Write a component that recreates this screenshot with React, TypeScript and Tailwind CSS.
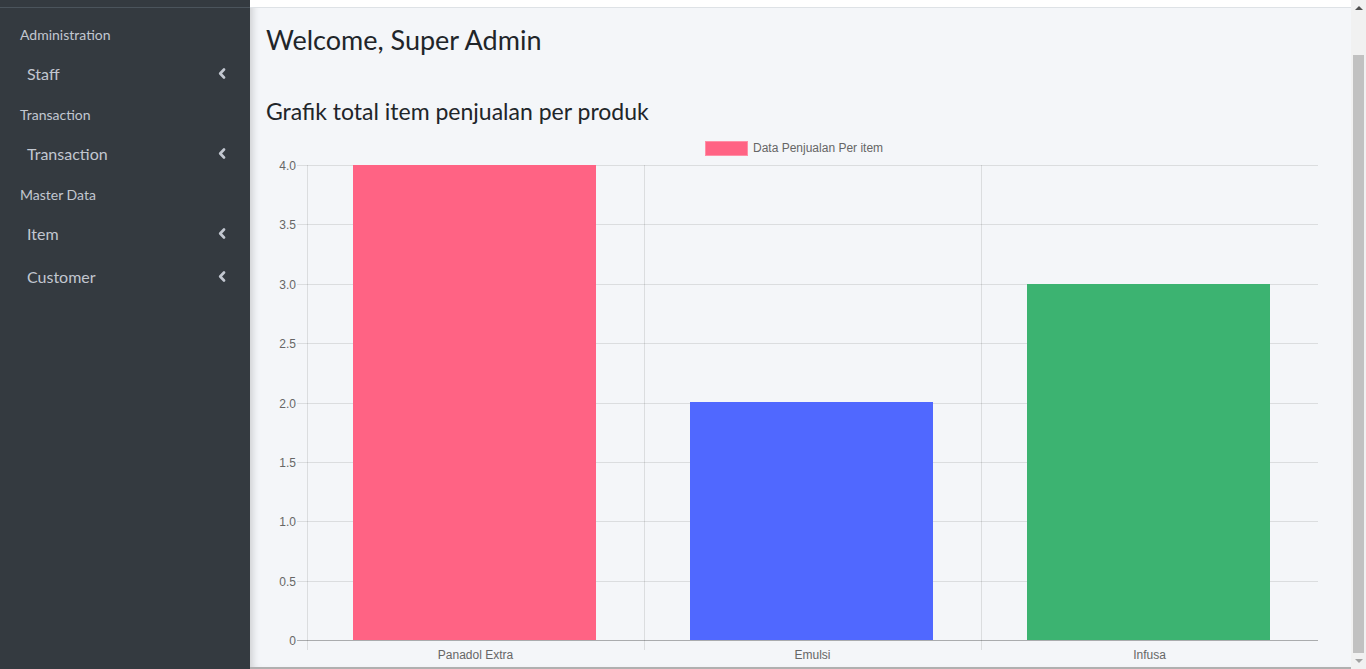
const menu = [
  { header: 'Administration', items: ['Staff'] },
  { header: 'Transaction', items: ['Transaction'] },
  { header: 'Master Data', items: ['Item', 'Customer'] },
];

const bars = [
  { label: 'Panadol Extra', value: 4, color: '#ff6384' },
  { label: 'Emulsi', value: 2, color: '#5068ff' },
  { label: 'Infusa', value: 3, color: '#3cb371' },
];

function AngleLeft() {
  return (
    <svg width="8" height="11" viewBox="0 0 8 11" className="block">
      <path d="M6 1.5 L2.2 5.5 L6 9.5" fill="none" stroke="#c2c7d0" strokeWidth="2.6" strokeLinecap="round" strokeLinejoin="round" />
    </svg>
  );
}

function Sidebar() {
  return (
    <aside className="w-[250px] shrink-0 bg-[#343a40] h-full">
      <div className="h-[8px] border-b border-[#4b545c]"></div>
      <nav className="pt-[15px]">
        {menu.map((group, gi) => (
          <div key={group.header} className={gi > 0 ? 'mt-[8px]' : ''}>
            <div className="px-5 h-[22px] flex items-center text-[14px] text-[#c2c7d0]">{group.header}</div>
            <div className="mt-[7px]">
              {group.items.map((item) => (
                <div key={item} className="flex items-center justify-between pl-[27px] pr-[24px] h-[43px] text-[16px] text-[#c2c7d0]">
                  <span>{item}</span>
                  <AngleLeft />
                </div>
              ))}
            </div>
          </div>
        ))}
      </nav>
    </aside>
  );
}

function BarChart() {
  const left = 41;
  const right = 1052;
  const top = 35;
  const bottom = 510;
  const step = (bottom - top) / 8;
  const cat = (right - left) / 3;
  const ticks = [4.0, 3.5, 3.0, 2.5, 2.0, 1.5, 1.0, 0.5, 0];

  return (
    <svg width="1069" height="535" className="block" style={{ fontFamily: '"Liberation Sans", Arial, sans-serif' }}>
      <rect x="439.5" y="11.5" width="42" height="14" fill="#ff6384" stroke="#ff8fa6" strokeWidth="1" />
      <text x="487" y="22" fontSize="12" fill="#666">Data Penjualan Per item</text>

      {ticks.map((t, i) => {
        const y = Math.round(top + i * step) + 0.5;
        return (
          <g key={t}>
            <line x1={31} x2={right} y1={y} y2={y} stroke={t === 0 ? 'rgba(0,0,0,0.3)' : 'rgba(0,0,0,0.1)'} />
            <text x={30} y={y + 4} fontSize="12" fill="#666" textAnchor="end">
              {t === 0 ? '0' : t.toFixed(1)}
            </text>
          </g>
        );
      })}

      {[0, 1, 2].map((i) => {
        const x = Math.round(left + i * cat) + 0.5;
        return <line key={i} x1={x} x2={x} y1={top} y2={bottom + 10} stroke="rgba(0,0,0,0.1)" />;
      })}

      {bars.map((b, i) => {
        const w = 243;
        const x = Math.round(left + i * cat + (cat - w) / 2) - 1;
        const h = Math.round((b.value / 4) * (bottom - top));
        return (
          <g key={b.label}>
            <rect x={x} y={bottom - h} width={w} height={h} fill={b.color} />
            <text x={left + i * cat + cat / 2} y={529} fontSize="12" fill="#666" textAnchor="middle">
              {b.label}
            </text>
          </g>
        );
      })}
    </svg>
  );
}

export default function App() {
  return (
    <div className="flex w-[1366px] h-[669px] overflow-hidden bg-[#f4f6f9]" style={{ fontFamily: '"Source Sans Pro", Lato, "Noto Sans", sans-serif' }}>
      <Sidebar />
      <main className="flex-1 flex flex-col shadow-[inset_6px_0_8px_-4px_rgba(0,0,0,0.18)]">
        <div className="h-[8px] bg-white border-b border-[#dee2e6]"></div>
        <div className="px-4">
          <h1 className="text-[27px] leading-[34px] text-[#212529] mt-[15px]">Welcome, Super Admin</h1>
          <h3 className="text-[23px] leading-[30px] text-[#212529] mt-[39px] mb-[4px]">Grafik total item penjualan per produk</h3>
          <BarChart />
        </div>
        <div className="mt-auto h-[2px] bg-[#b0b0b0]"></div>
      </main>
      <div className="w-[15px] shrink-0 bg-[#f1f1f1] flex flex-col items-center">
        <div className="h-[16px] flex items-center justify-center">
          <div className="w-0 h-0 border-l-[4px] border-r-[4px] border-b-[4px] border-l-transparent border-r-transparent border-b-[#505050]"></div>
        </div>
        <div className="w-[11px] mt-[39px] h-[598px] bg-[#c1c1c1]"></div>
        <div className="h-[16px] flex items-center justify-center">
          <div className="w-0 h-0 border-l-[4px] border-r-[4px] border-t-[4px] border-l-transparent border-r-transparent border-t-[#a3a3a3]"></div>
        </div>
      </div>
    </div>
  );
}
